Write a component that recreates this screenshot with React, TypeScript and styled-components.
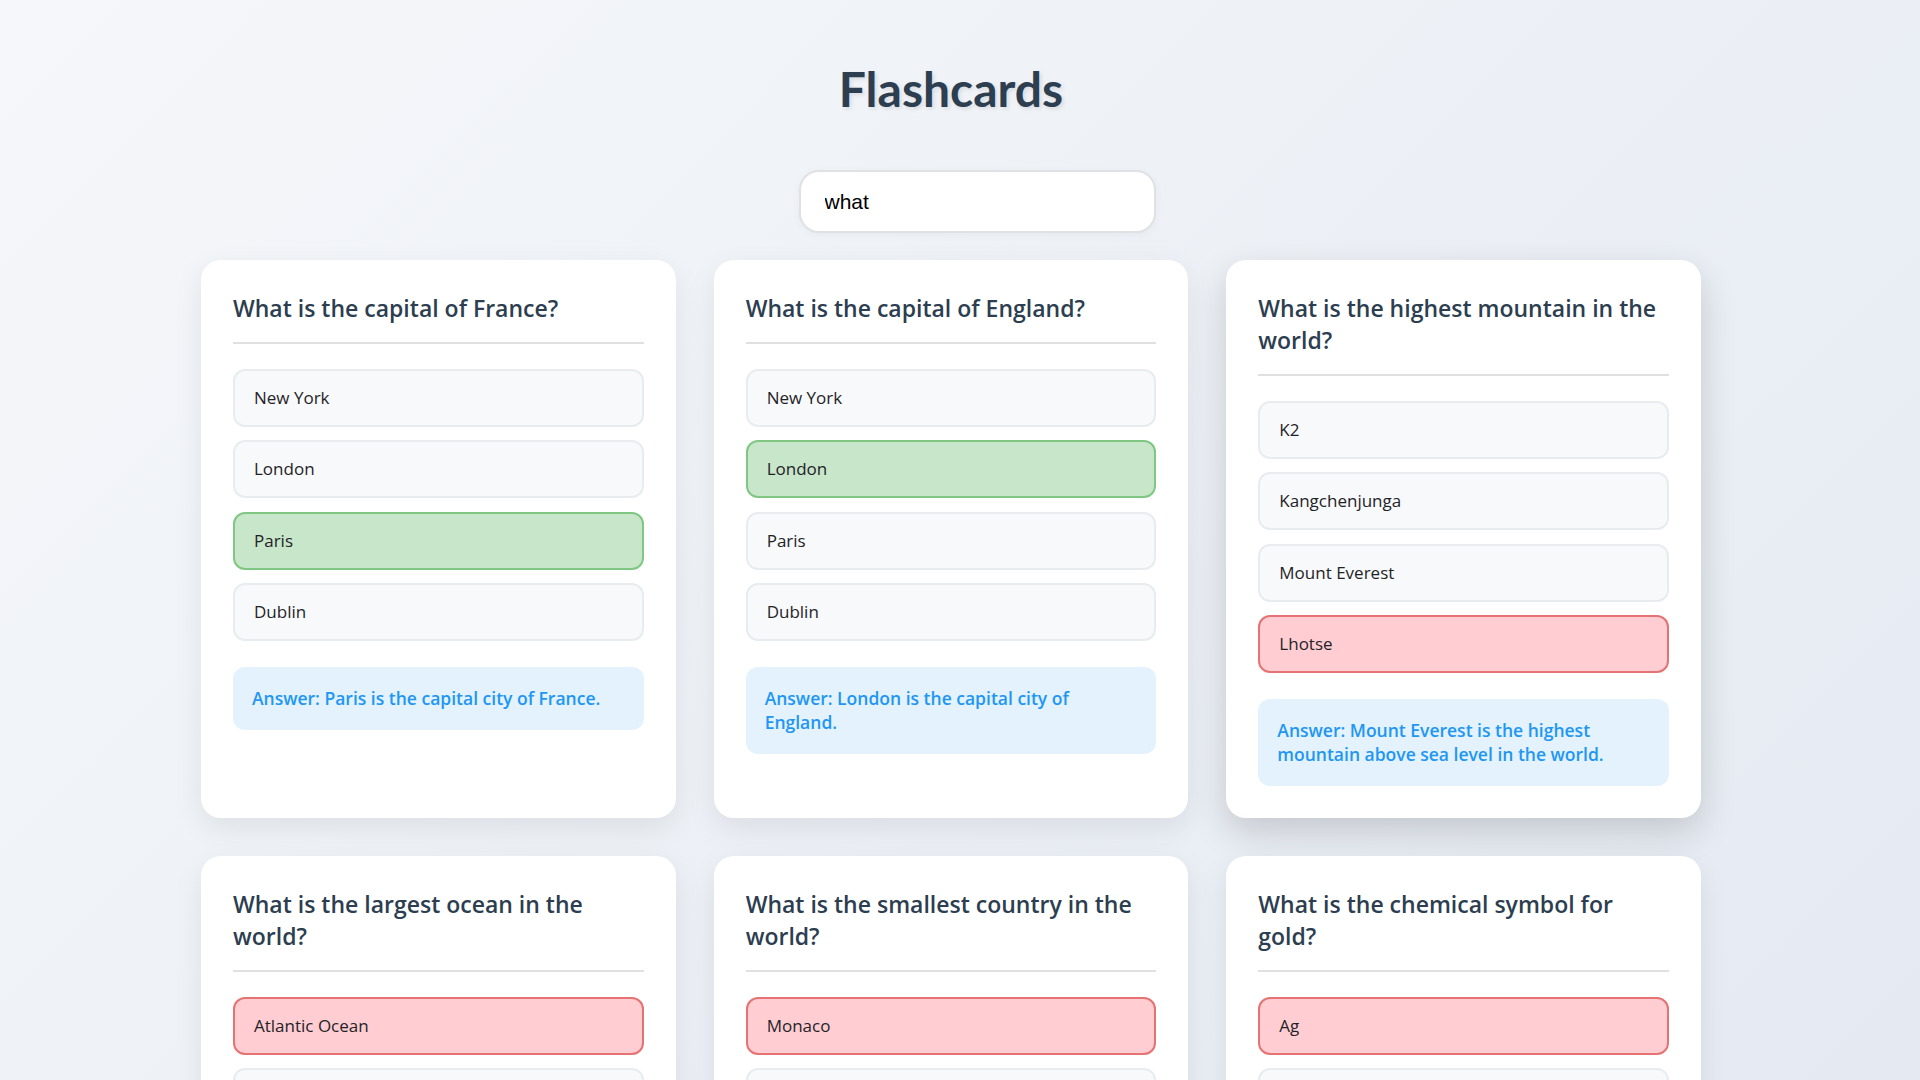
import React, { useState } from 'react';
import styled, { createGlobalStyle } from 'styled-components';

type Card = {
  question: string;
  options: string[];
  correct: number;
  selected: number | null;
  answer: string;
};

const initialCards: Card[] = [
  { question: 'What is the capital of France?', options: ['New York', 'London', 'Paris', 'Dublin'], correct: 2, selected: 2, answer: 'Paris is the capital city of France.' },
  { question: 'What is the capital of England?', options: ['New York', 'London', 'Paris', 'Dublin'], correct: 1, selected: 1, answer: 'London is the capital city of England.' },
  { question: 'What is the highest mountain in the world?', options: ['K2', 'Kangchenjunga', 'Mount Everest', 'Lhotse'], correct: 2, selected: 3, answer: 'Mount Everest is the highest mountain above sea level in the world.' },
  { question: 'What is the largest ocean in the world?', options: ['Atlantic Ocean', 'Indian Ocean', 'Arctic Ocean', 'Pacific Ocean'], correct: 3, selected: 0, answer: 'The Pacific Ocean is the largest and deepest ocean on Earth.' },
  { question: 'What is the smallest country in the world?', options: ['Monaco', 'Vatican City', 'San Marino', 'Liechtenstein'], correct: 1, selected: 0, answer: 'Vatican City is the smallest country in the world.' },
  { question: 'What is the chemical symbol for gold?', options: ['Ag', 'Au', 'Fe', 'Pb'], correct: 1, selected: 0, answer: 'Au is the chemical symbol for gold.' },
  { question: 'What is the largest planet in our solar system?', options: ['Saturn', 'Jupiter', 'Neptune', 'Earth'], correct: 1, selected: 1, answer: 'Jupiter is the largest planet in our solar system.' },
  { question: 'What is the boiling point of water at sea level?', options: ['90°C', '100°C', '110°C', '120°C'], correct: 1, selected: 1, answer: 'Water boils at 100°C (212°F) at sea level.' },
  { question: 'What is the longest river in the world?', options: ['Amazon', 'Nile', 'Yangtze', 'Mississippi'], correct: 1, selected: 0, answer: 'The Nile is generally regarded as the longest river in the world.' },
  { question: 'What is the capital of Japan?', options: ['Kyoto', 'Osaka', 'Tokyo', 'Seoul'], correct: 2, selected: 2, answer: 'Tokyo is the capital city of Japan.' },
  { question: 'What is the hardest natural substance?', options: ['Gold', 'Iron', 'Diamond', 'Quartz'], correct: 2, selected: 2, answer: 'Diamond is the hardest naturally occurring substance.' },
  { question: 'What is the largest mammal?', options: ['Elephant', 'Blue Whale', 'Giraffe', 'Orca'], correct: 1, selected: 0, answer: 'The blue whale is the largest mammal on Earth.' },
  { question: 'What is the capital of Australia?', options: ['Sydney', 'Melbourne', 'Canberra', 'Perth'], correct: 2, selected: 0, answer: 'Canberra is the capital city of Australia.' },
  { question: 'What is the freezing point of water?', options: ['0°C', '10°C', '-10°C', '32°C'], correct: 0, selected: 0, answer: 'Water freezes at 0°C (32°F) at sea level.' },
  { question: 'What is the largest desert in the world?', options: ['Sahara', 'Gobi', 'Antarctic Desert', 'Kalahari'], correct: 2, selected: 0, answer: 'The Antarctic Desert is the largest desert in the world.' },
  { question: 'What is the chemical formula for water?', options: ['H2O', 'CO2', 'O2', 'NaCl'], correct: 0, selected: 0, answer: 'H2O is the chemical formula for water.' },
  { question: 'What is the capital of Canada?', options: ['Toronto', 'Vancouver', 'Ottawa', 'Montreal'], correct: 2, selected: 0, answer: 'Ottawa is the capital city of Canada.' },
  { question: 'What is the square root of 64?', options: ['6', '7', '8', '9'], correct: 2, selected: 2, answer: 'The square root of 64 is 8.' },
  { question: 'What is the currency of Japan?', options: ['Yuan', 'Won', 'Yen', 'Ringgit'], correct: 2, selected: 2, answer: 'The yen is the official currency of Japan.' },
  { question: 'What is the largest continent?', options: ['Africa', 'Asia', 'Europe', 'North America'], correct: 1, selected: 0, answer: 'Asia is the largest continent by both area and population.' },
  { question: 'What is the main language spoken in Brazil?', options: ['Spanish', 'Portuguese', 'French', 'English'], correct: 1, selected: 1, answer: 'Portuguese is the official language of Brazil.' },
  { question: 'What is the capital of Italy?', options: ['Milan', 'Naples', 'Rome', 'Venice'], correct: 2, selected: 2, answer: 'Rome is the capital city of Italy.' },
  { question: 'What is the tallest animal in the world?', options: ['Elephant', 'Giraffe', 'Ostrich', 'Camel'], correct: 1, selected: 1, answer: 'The giraffe is the tallest animal in the world.' },
  { question: 'What is the closest star to Earth?', options: ['Proxima Centauri', 'Sirius', 'The Sun', 'Polaris'], correct: 2, selected: 0, answer: 'The Sun is the closest star to Earth.' },
  { question: 'What is the capital of Germany?', options: ['Munich', 'Berlin', 'Hamburg', 'Frankfurt'], correct: 1, selected: 1, answer: 'Berlin is the capital city of Germany.' },
  { question: 'What is the largest organ of the human body?', options: ['Heart', 'Liver', 'Skin', 'Brain'], correct: 2, selected: 1, answer: 'The skin is the largest organ of the human body.' },
  { question: 'What is the capital of Spain?', options: ['Barcelona', 'Madrid', 'Seville', 'Valencia'], correct: 1, selected: 1, answer: 'Madrid is the capital city of Spain.' },
  { question: 'What is the fastest land animal?', options: ['Lion', 'Cheetah', 'Horse', 'Pronghorn'], correct: 1, selected: 1, answer: 'The cheetah is the fastest land animal.' },
  { question: 'What is the chemical symbol for iron?', options: ['Ir', 'In', 'Fe', 'I'], correct: 2, selected: 0, answer: 'Fe is the chemical symbol for iron.' },
  { question: 'What is the capital of Egypt?', options: ['Alexandria', 'Cairo', 'Luxor', 'Giza'], correct: 1, selected: 1, answer: 'Cairo is the capital city of Egypt.' },
  { question: 'What is the smallest planet in our solar system?', options: ['Mars', 'Mercury', 'Venus', 'Pluto'], correct: 1, selected: 3, answer: 'Mercury is the smallest planet in our solar system.' },
  { question: 'What is the capital of Russia?', options: ['Saint Petersburg', 'Moscow', 'Kazan', 'Novosibirsk'], correct: 1, selected: 1, answer: 'Moscow is the capital city of Russia.' },
  { question: 'What is the most spoken language in the world?', options: ['English', 'Mandarin Chinese', 'Spanish', 'Hindi'], correct: 0, selected: 0, answer: 'English has the most total speakers in the world.' },
  { question: 'What is the capital of China?', options: ['Shanghai', 'Beijing', 'Hong Kong', 'Guangzhou'], correct: 1, selected: 1, answer: 'Beijing is the capital city of China.' },
  { question: 'What is the largest country by area?', options: ['Canada', 'China', 'Russia', 'United States'], correct: 2, selected: 0, answer: 'Russia is the largest country in the world by area.' },
  { question: 'What is the capital of India?', options: ['Mumbai', 'New Delhi', 'Kolkata', 'Chennai'], correct: 1, selected: 1, answer: 'New Delhi is the capital city of India.' },
];

const App: React.FC = () => {
  const [search, setSearch] = useState('what');
  const [cards, setCards] = useState<Card[]>(initialCards);

  // 옵션 클릭 시 선택 저장
  const handleSelect = (cardIndex: number, optionIndex: number) => {
    setCards((prev) =>
      prev.map((c, i) => (i === cardIndex ? { ...c, selected: optionIndex } : c))
    );
  };

  const visible = cards
    .map((card, index) => ({ card, index }))
    .filter(({ card }) => card.question.toLowerCase().includes(search.toLowerCase()));

  return (
    <>
      <GlobalStyle />
      <Page>
        <Title>Flashcards</Title>
        <SearchRow>
          <SearchInput
            type='text'
            value={search}
            placeholder='Search questions...'
            onChange={(e) => setSearch(e.target.value)}
          />
        </SearchRow>

        <Grid>
          {visible.map(({ card, index }, pos) => (
            <CardBox key={card.question} $raised={pos === 2}>
              <Question>{card.question}</Question>
              <OptionList>
                {card.options.map((opt, oi) => {
                  const state =
                    card.selected === oi ? (oi === card.correct ? 'correct' : 'wrong') : 'idle';
                  return (
                    <OptionButton key={opt} $state={state} onClick={() => handleSelect(index, oi)}>
                      {opt}
                    </OptionButton>
                  );
                })}
              </OptionList>
              {card.selected !== null && <AnswerBox>Answer: {card.answer}</AnswerBox>}
            </CardBox>
          ))}
        </Grid>
      </Page>
    </>
  );
};

export default App;

/* ====================== Styled Components ====================== */

const GlobalStyle = createGlobalStyle`
  html, body {
    margin: 0;
    padding: 0;
  }
  body {
    font-family: 'Segoe UI', 'Open Sans', sans-serif;
  }
  * {
    box-sizing: border-box;
  }
`;

const Page = styled.div`
  min-height: 100vh;
  padding: 60px 18px 48px 0;
  background: linear-gradient(135deg, #f5f7fa 0%, #c3cfe2 100%);
`;

const Title = styled.h1`
  margin: 0;
  text-align: center;
  font-family: 'Segoe UI', Lato, sans-serif;
  font-size: 48px;
  line-height: 58px;
  font-weight: 700;
  color: #2c3e50;
  text-shadow: 2px 2px 4px rgba(0, 0, 0, 0.1);
`;

const SearchRow = styled.div`
  display: flex;
  justify-content: center;
  margin-top: 52px;
`;

const SearchInput = styled.input`
  width: 357px;
  height: 63px;
  margin-left: 52px;
  padding: 0 24px;
  border: 2px solid #dfe1e5;
  border-radius: 20px;
  background: #ffffff;
  font-family: 'Liberation Sans', Arial, sans-serif;
  font-size: 21px;
  color: #000000;
  outline: none;
  box-shadow: 0 2px 8px rgba(0, 0, 0, 0.04);
`;

const Grid = styled.div`
  display: grid;
  grid-template-columns: repeat(3, 1fr);
  gap: 38px;
  max-width: 1500px;
  margin: 27px auto 0;
`;

const CardBox = styled.div<{ $raised?: boolean }>`
  background: #ffffff;
  border-radius: 20px;
  padding: 32px;
  box-shadow: ${({ $raised }) =>
    $raised ? '0 14px 36px rgba(0, 0, 0, 0.16)' : '0 10px 30px rgba(0, 0, 0, 0.08)'};
`;

const Question = styled.h2`
  margin: 0 0 25px;
  padding-bottom: 18px;
  border-bottom: 2px solid #e0e0e0;
  font-size: 23px;
  line-height: 32px;
  font-weight: 600;
  color: #2c3e50;
`;

const OptionList = styled.div`
  display: flex;
  flex-direction: column;
  gap: 13.33px;
`;

const optionColors = {
  idle: { bg: '#f8f9fa', border: '#e9ecef' },
  correct: { bg: '#c8e6c9', border: '#81c784' },
  wrong: { bg: '#ffcdd2', border: '#e57373' },
};

const OptionButton = styled.div<{ $state: 'idle' | 'correct' | 'wrong' }>`
  padding: 16px 19px;
  border: 2px solid ${({ $state }) => optionColors[$state].border};
  border-radius: 12px;
  background: ${({ $state }) => optionColors[$state].bg};
  font-size: 17px;
  line-height: 22px;
  color: #1f2328;
  cursor: pointer;
`;

const AnswerBox = styled.div`
  margin-top: 26px;
  padding: 19.5px 19px;
  border-radius: 12px;
  background: #e3f2fd;
  color: #2196f3;
  font-size: 17.5px;
  line-height: 24px;
  font-weight: 600;
`;
